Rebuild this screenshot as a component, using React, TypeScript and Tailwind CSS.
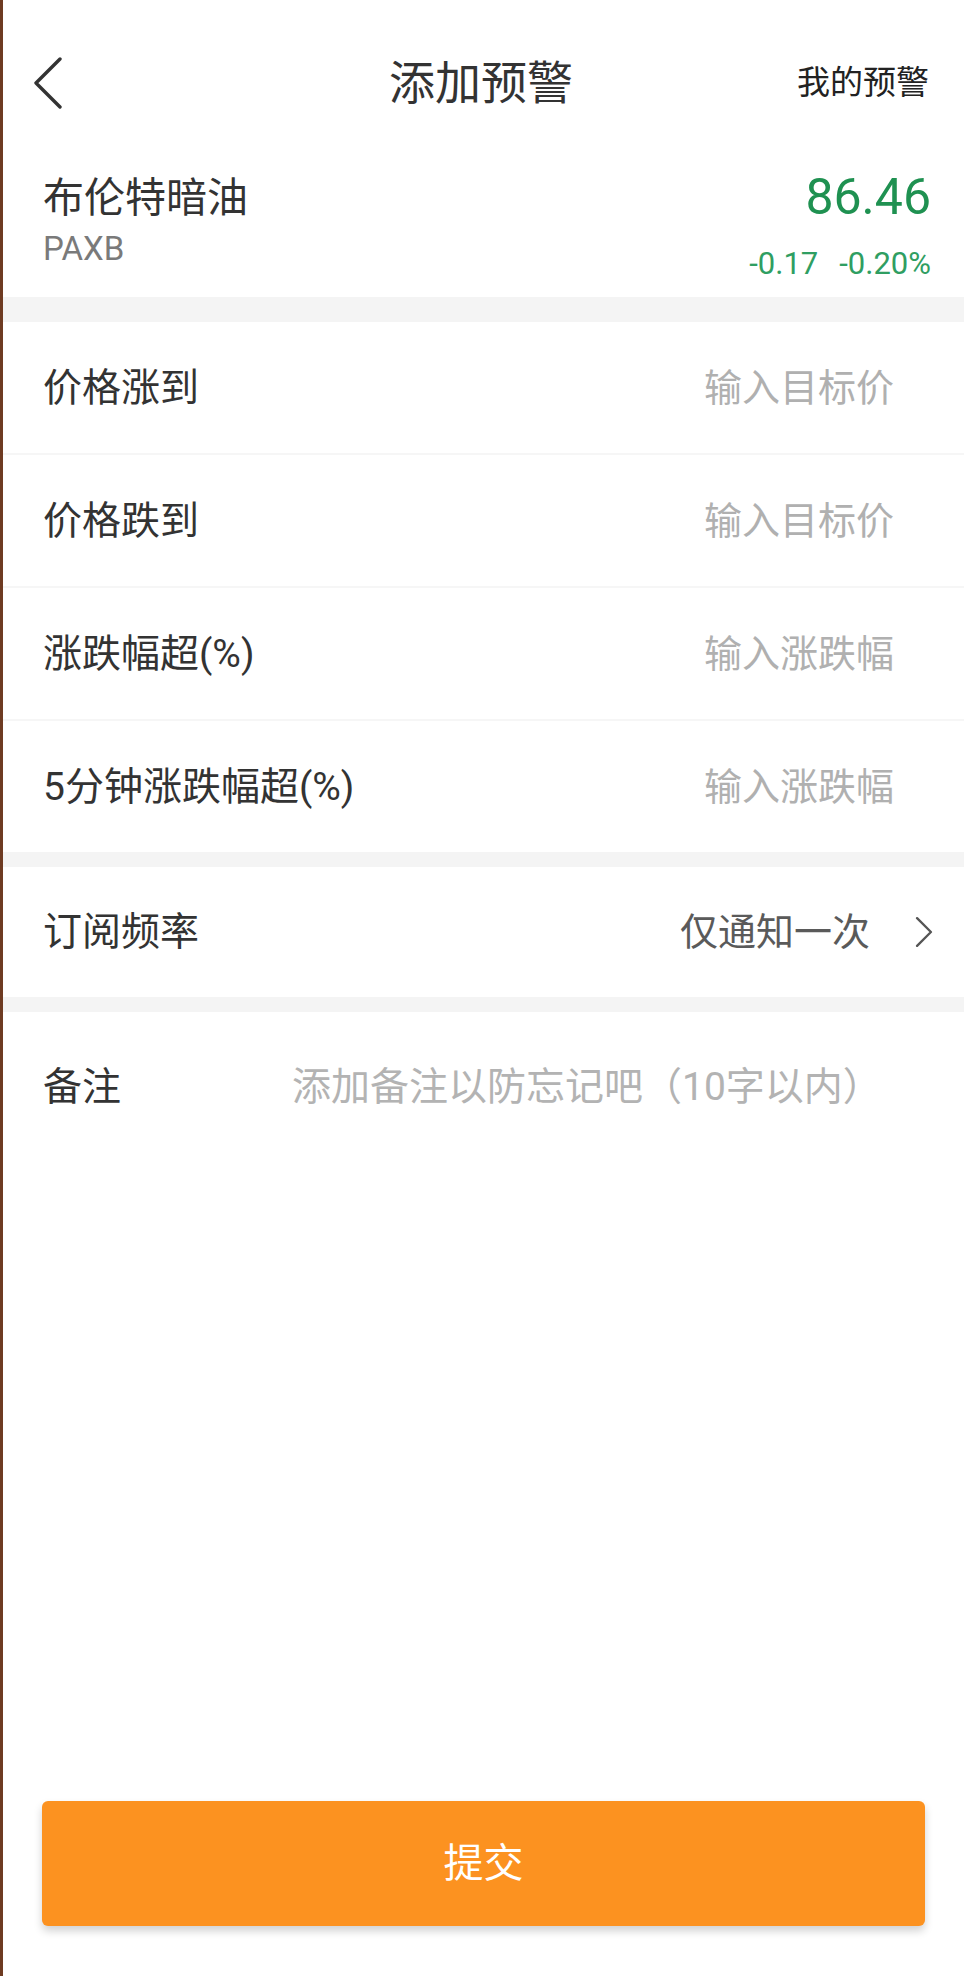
import { useState } from 'react';

// Pagina "添加预警": scheda prezzo + campi soglia + frequenza + nota, bottone in basso.
const FONT = 'font-["Roboto","Noto_Sans_CJK_SC",sans-serif]';

interface Campo { key: string; label: string; placeholder: string }

const campi: Campo[] = [
    { key: 'su', label: '价格涨到', placeholder: '输入目标价' },
    { key: 'giu', label: '价格跌到', placeholder: '输入目标价' },
    { key: 'pct', label: '涨跌幅超(%)', placeholder: '输入涨跌幅' },
    { key: 'pct5', label: '5分钟涨跌幅超(%)', placeholder: '输入涨跌幅' },
];

function Chevron({ dir, className, width = 3.4 }: { dir: 'left' | 'right'; className?: string; width?: number }) {
    return (
        <svg viewBox="0 0 30 52" className={className} fill="none" stroke="currentColor" strokeWidth={width} strokeLinecap="round" strokeLinejoin="round">
            {dir === 'left' ? <polyline points="27,2 3,26 27,50" /> : <polyline points="3,2 27,26 3,50" />}
        </svg>
    );
}

export default function App() {
    const [valori, setValori] = useState<Record<string, string>>({});
    const [nota, setNota] = useState('');

    return (
        <div className={`${FONT} flex min-h-[1976px] w-full flex-col border-l-[3px] border-[#6e3b22] bg-white text-[#333]`}>
            {/* header */}
            <div className="flex h-[166px] items-center justify-between pl-[30px] pr-[35px]">
                <button aria-label="返回" className="flex w-[160px] items-center text-[#333]">
                    <Chevron dir="left" className="h-[52px] w-[30px]" />
                </button>
                <h1 className="text-[46px] leading-[56px] font-normal text-[#333]">添加预警</h1>
                <button className="w-[160px] text-right text-[33px] leading-[40px] font-normal text-[#222]">我的预警</button>
            </div>

            {/* strumento */}
            <div className="flex h-[131px] justify-between pl-[40px] pr-[33px]">
                <div className="flex flex-col pt-[8px]">
                    <span className="text-[41px] leading-[48px] font-normal text-[#333]">布伦特暗油</span>
                    <span className="mt-[7px] text-[33px] leading-[40px] text-[#7a7a7a]">PAXB</span>
                </div>
                <div className="flex flex-col items-end pt-[3px]">
                    <span className="text-[50px] leading-[56px] font-normal text-[#1f9151]">86.46</span>
                    <div className="mt-[19px] flex gap-[21px] text-[31px] leading-[40px] text-[#2f9e62]">
                        <span>-0.17</span>
                        <span>-0.20%</span>
                    </div>
                </div>
            </div>

            <div className="h-[25px] bg-[#f4f4f4]" />

            {campi.map((c, i) => (
                <div
                    key={c.key}
                    className={`flex items-center pl-[40px] pr-[70px] ${i < campi.length - 1 ? 'h-[133px] border-b-2 border-[#f6f6f6]' : 'h-[131px]'}`}
                >
                    <label htmlFor={c.key} className="shrink-0 text-[39px] leading-[48px] text-[#333]">{c.label}</label>
                    <input
                        id={c.key}
                        value={valori[c.key] ?? ''}
                        onChange={(e) => setValori({ ...valori, [c.key]: e.target.value })}
                        placeholder={c.placeholder}
                        className={`${FONT} min-w-0 flex-1 bg-transparent text-right text-[38px] leading-[48px] text-[#333] outline-none placeholder:text-[#b0b0b0]`}
                    />
                </div>
            ))}

            <div className="h-[15px] bg-[#f4f4f4]" />

            <button className="flex h-[130px] items-center justify-between pl-[40px] pr-[31px]">
                <span className="text-[39px] leading-[48px] text-[#333]">订阅频率</span>
                <span className="flex items-center gap-[45px] text-[38px] leading-[48px] text-[#5a5a5a]">
                    仅通知一次
                    <Chevron dir="right" className="h-[30px] w-[18px] text-[#555]" width={4} />
                </span>
            </button>

            <div className="h-[15px] bg-[#f4f4f4]" />

            <div className="flex items-center pl-[40px] pr-[35px] pt-[51px]">
                <label htmlFor="nota" className="w-[249px] shrink-0 text-[39px] leading-[48px] text-[#333]">备注</label>
                <input
                    id="nota"
                    value={nota}
                    maxLength={10}
                    onChange={(e) => setNota(e.target.value)}
                    placeholder="添加备注以防忘记吧（10字以内）"
                    className={`${FONT} min-w-0 flex-1 bg-transparent text-[39px] leading-[48px] text-[#333] outline-none placeholder:text-[#b3b3b3]`}
                />
            </div>

            <div className="flex-1" />

            <div className="px-[39px] pb-[50px]">
                <button className="flex h-[125px] w-full items-center justify-center rounded-[6px] bg-[#fc9220] text-[40px] leading-[48px] font-normal text-white shadow-[0_5px_8px_rgba(0,0,0,0.18)]">
                    提交
                </button>
            </div>
        </div>
    );
}
